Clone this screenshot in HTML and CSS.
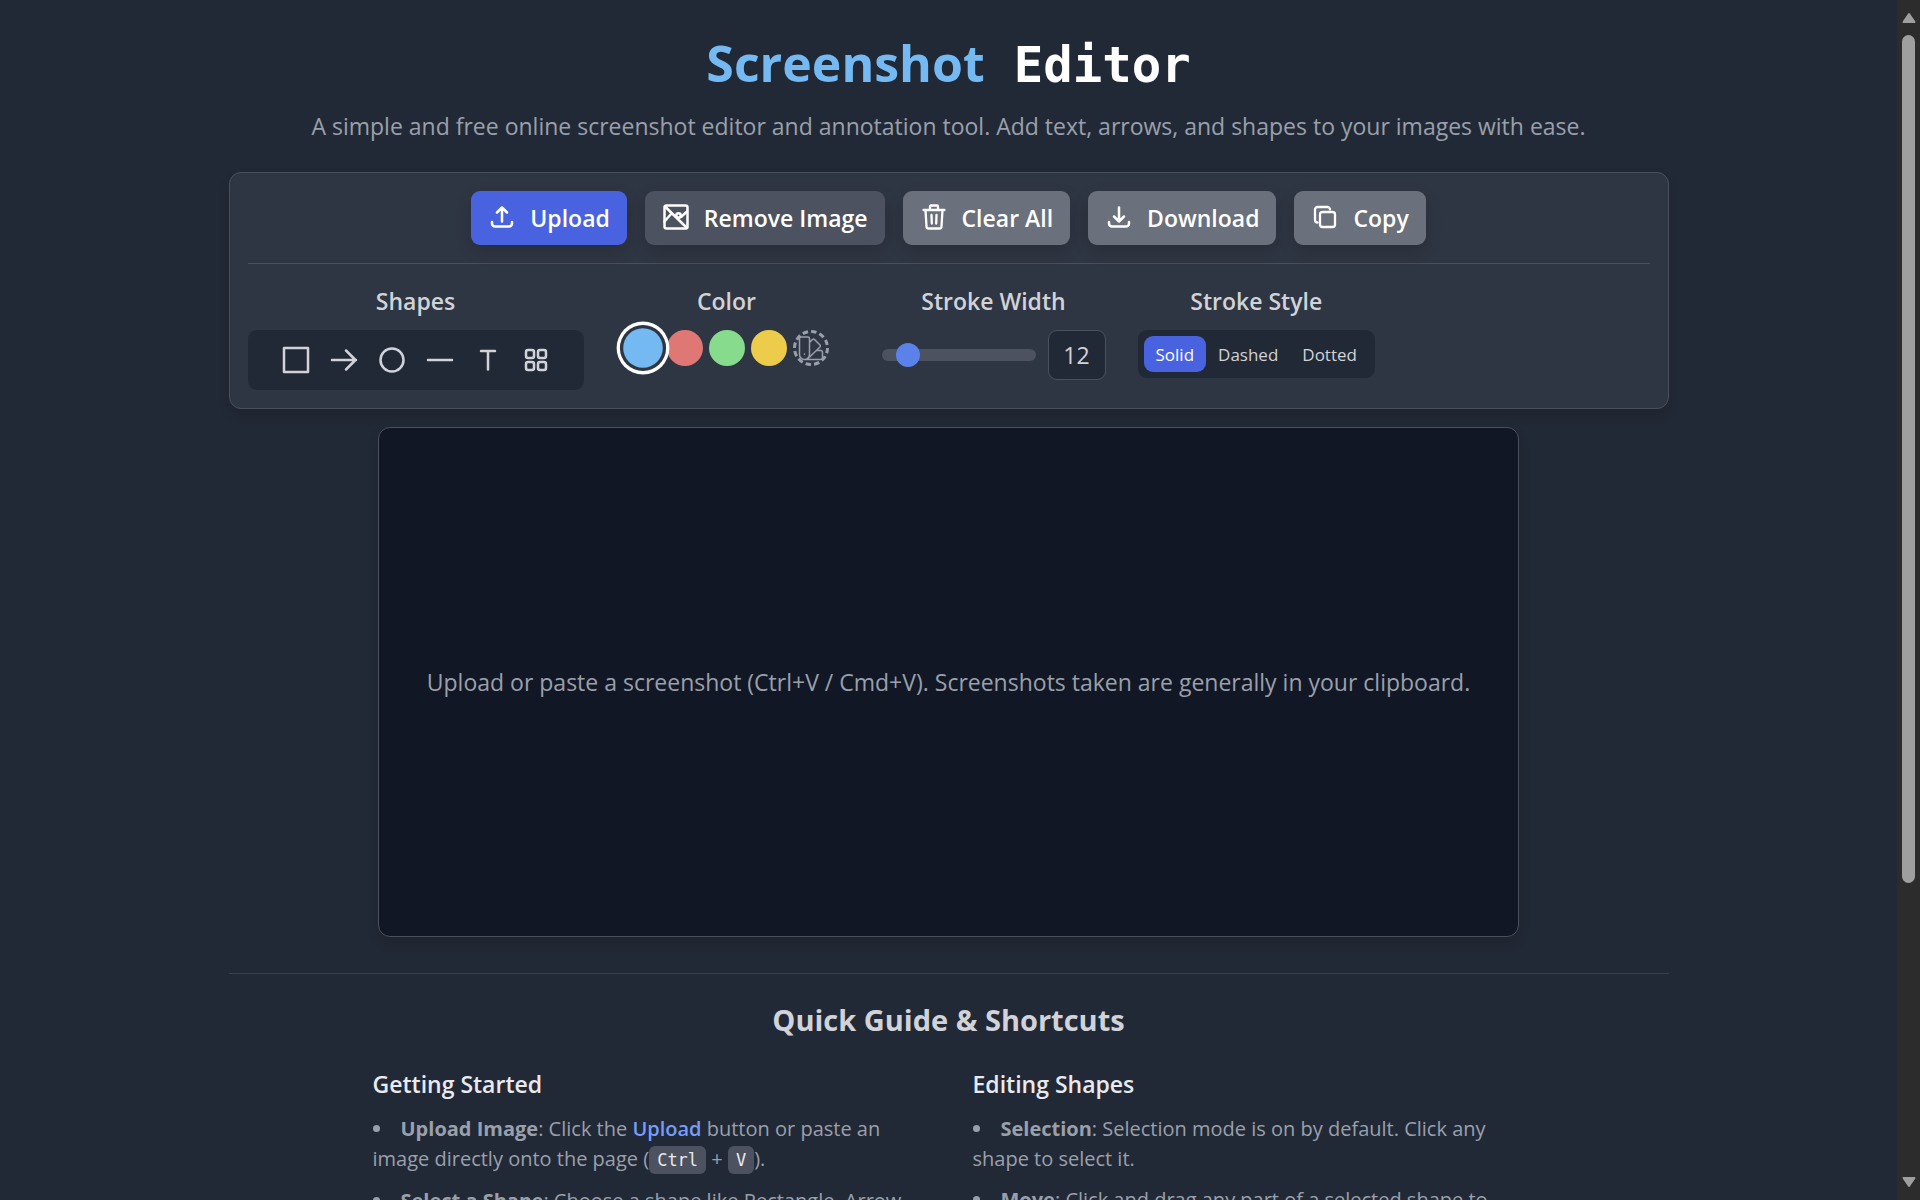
FILE: index.html
```html
<!DOCTYPE html>
<html lang="en">
<head>
    <meta charset="UTF-8">
    <meta name="viewport" content="width=device-width, initial-scale=1.0">
    <title>Screenshot Editor</title>
    <link rel="stylesheet" href="styles.css">
</head>
<body>
    <div class="page">
        <div class="content">
            <header class="header">
                <h1><span class="brand">Screenshot</span> <span class="mono">Editor</span></h1>
                <p>A simple and free online screenshot editor and annotation tool. Add text, arrows, and shapes to your images with ease.</p>
            </header>

            <section class="toolbar">
                <div class="actions">
                    <button class="btn btn-primary" type="button">
                        <svg class="icon" viewBox="-2 -1 28 28"><path d="M12 16.500V3M7 7.500l5-5 5 5M2 17v1.500a3 3 0 0 0 3 3h14a3 3 0 0 0 3-3V17"/></svg>
                        Upload
                    </button>
                    <button class="btn btn-dark" type="button">
                        <svg class="icon" viewBox="-1 0 28 28"><rect x="1.500" y="1.500" width="23" height="23" rx="2"/><path d="M2 2.500l22 21.500M1.500 17.500l7-8M9 9l4 4.500 3 .5M18 13l6-5.500"/><circle cx="15.500" cy="11.500" r="2.200"/></svg>
                        Remove Image
                    </button>
                    <button class="btn" type="button">
                        <svg class="icon icon-thin" viewBox="-1 0 28 28"><path d="M2.500 6h21M9 5.500V2.500a1 1 0 0 1 1-1h6a1 1 0 0 1 1 1v3M4.500 6l1 16.500a2 2 0 0 0 2 2h11a2 2 0 0 0 2-2L21.500 6M10.500 11l.3 8.500M15.500 11l-.3 8.500"/></svg>
                        Clear All
                    </button>
                    <button class="btn" type="button">
                        <svg class="icon" viewBox="-2 -1 28 28"><path d="M12 2.500v13.500M7 11.500l5 5 5-5M2 17v1.500a3 3 0 0 0 3 3h14a3 3 0 0 0 3-3V17"/></svg>
                        Download
                    </button>
                    <button class="btn" type="button">
                        <svg class="icon icon-thin" viewBox="-3 -2 28 28"><rect x="6" y="6" width="15" height="15" rx="2.500"/><path d="M3.500 16.500A2.500 2.500 0 0 1 1 14V3.500A2.500 2.500 0 0 1 3.500 1h10A2.500 2.500 0 0 1 16 3.500"/></svg>
                        Copy
                    </button>
                </div>

                <div class="options">
                    <div class="option option-shapes">
                        <h2>Shapes</h2>
                        <div class="shape-list">
                            <button type="button" aria-label="Rectangle"><svg viewBox="0 0 28 28"><rect x="2" y="2" width="24" height="24"/></svg></button>
                            <button type="button" aria-label="Arrow"><svg viewBox="0 0 28 28"><path d="M2 14h24M16 4.500l9.500 9.500-9.500 9.500"/></svg></button>
                            <button type="button" aria-label="Circle"><svg viewBox="0 0 28 28"><circle cx="14" cy="14" r="11.500"/></svg></button>
                            <button type="button" aria-label="Line"><svg viewBox="0 0 28 28"><path d="M2 14h24"/></svg></button>
                            <button type="button" aria-label="Text"><svg viewBox="0 0 28 28"><path d="M7 5h14M14 5v18.500"/></svg></button>
                            <button type="button" aria-label="More shapes"><svg viewBox="0 0 28 28"><rect x="4" y="4" width="8" height="8" rx="2"/><rect x="16" y="4" width="8" height="8" rx="2"/><rect x="4" y="16" width="8" height="8" rx="2"/><rect x="16" y="16" width="8" height="8" rx="2"/></svg></button>
                        </div>
                    </div>

                    <div class="option option-color">
                        <h2>Color</h2>
                        <div class="color-list">
                            <button class="swatch blue active" type="button" aria-label="Blue"></button>
                            <button class="swatch red" type="button" aria-label="Red"></button>
                            <button class="swatch green" type="button" aria-label="Green"></button>
                            <button class="swatch yellow" type="button" aria-label="Yellow"></button>
                            <button class="swatch custom" type="button" aria-label="Custom color">
                                <svg viewBox="0 0 36 36"><circle class="ring" cx="18" cy="18" r="16.500"/><path d="M6.500 8.500a1.500 1.500 0 0 1 1.500-1.500h7a1.500 1.500 0 0 1 1.500 1.500v16a5 5 0 0 1-10 0zM16.500 12.500l3-3a1.500 1.500 0 0 1 2 0l5.500 5.500a1.500 1.500 0 0 1 0 2L15.500 28M23.500 20.500H28a1.500 1.500 0 0 1 1.500 1.500v6a1.500 1.500 0 0 1-1.500 1.500H11.500M11.500 24v.2"/></svg>
                            </button>
                        </div>
                    </div>

                    <div class="option option-width">
                        <h2>Stroke Width</h2>
                        <div class="width-row">
                            <input class="slider" type="range" min="1" max="72" value="9" aria-label="Stroke width slider">
                            <input class="number" type="text" value="12" aria-label="Stroke width">
                        </div>
                    </div>

                    <div class="option">
                        <h2>Stroke Style</h2>
                        <div class="style-list">
                            <button class="active" type="button">Solid</button>
                            <button type="button">Dashed</button>
                            <button type="button">Dotted</button>
                        </div>
                    </div>
                </div>
            </section>

            <main class="canvas">
                <p>Upload or paste a screenshot (Ctrl+V / Cmd+V). Screenshots taken are generally in your clipboard.</p>
            </main>

            <section class="guide">
                <h2>Quick Guide &amp; Shortcuts</h2>
                <div class="guide-columns">
                    <div>
                        <h3>Getting Started</h3>
                        <ul>
                            <li><strong>Upload Image</strong>: Click the <a href="#">Upload</a> button or paste an image directly onto the page (<kbd>Ctrl</kbd> + <kbd>V</kbd>).</li>
                            <li><strong>Select a Shape</strong>: Choose a shape like Rectangle, Arrow</li>
                        </ul>
                    </div>
                    <div>
                        <h3>Editing Shapes</h3>
                        <ul>
                            <li><strong>Selection</strong>: Selection mode is on by default. Click any shape to select it.</li>
                            <li><strong>Move</strong>: Click and drag any part of a selected shape to</li>
                        </ul>
                    </div>
                </div>
            </section>
        </div>

        <div class="scrollbar">
            <svg viewBox="0 0 16 12"><path d="M8 2l5.500 8h-11z"/></svg>
            <div class="track"><div class="thumb"></div></div>
            <svg viewBox="0 0 16 12"><path d="M8 10l5.500-8h-11z"/></svg>
        </div>
    </div>
</body>
</html>
```
FILE: styles.css
```css
* {
    box-sizing: border-box;
}
body {
    margin: 0;
    font-family: "Open Sans", "Noto Sans", sans-serif;
    font-size: 23px;
    background-color: #222936;
    color: #d1d3d8;
}
h1, h2, h3, p, ul {
    margin: 0;
    padding: 0;
}
button, input {
    font-family: inherit;
    font-size: inherit;
    color: inherit;
    border: none;
}
button {
    cursor: pointer;
}
svg {
    display: block;
    fill: none;
    stroke: currentColor;
    stroke-width: 2;
    stroke-linecap: round;
    stroke-linejoin: round;
}
.page {
    display: grid;
    grid-template-columns: 1fr 23px;
    height: 100vh;
    overflow: hidden;
}
.content {
    display: flex;
    flex-direction: column;
    align-items: center;
    height: 100vh;
    overflow: hidden;
    padding: 27px 24px 0;
}
.content > * {
    flex-shrink: 0;
}
.header {
    text-align: center;
    margin-bottom: 28px;
}
.header h1 {
    font-size: 50px;
    line-height: 72px;
    font-weight: 700;
    color: #fff;
}
.header h1 .brand {
    color: #74b9f1;
    margin-right: 16px;
}
.header h1 .mono {
    font-family: "DejaVu Sans Mono", monospace;
    font-size: 49px;
}
.header p {
    margin-top: 6px;
    line-height: 36px;
    color: #9aa0ab;
}

/* Toolbar */
.toolbar {
    width: 100%;
    max-width: 1440px;
    padding: 18px;
    background-color: #2f3643;
    border: 1px solid #4a505d;
    border-radius: 12px;
    box-shadow: 0 6px 12px rgba(0, 0, 0, 0.12);
}
.actions {
    display: flex;
    justify-content: center;
    gap: 18px;
    padding-bottom: 18px;
    border-bottom: 1px solid #4a505d;
}
.btn {
    display: flex;
    align-items: center;
    gap: 14px;
    height: 54px;
    padding: 0 17px;
    border-radius: 9px;
    background-color: #6a707c;
    color: #fff;
    font-weight: 600;
    box-shadow: 0 6px 16px rgba(0, 0, 0, 0.16);
}
.btn-primary {
    background-color: #4963e0;
}
.btn-dark {
    background-color: #4c525f;
}
.icon {
    width: 28px;
    height: 28px;
    stroke-width: 2.5;
}
.icon-thin {
    stroke-width: 2.3;
}
.options {
    display: flex;
    align-items: flex-start;
    gap: 20px;
    padding-top: 18px;
}
.option {
    display: flex;
    flex-direction: column;
    align-items: center;
    gap: 10px;
}
.option h2 {
    font-size: 23px;
    line-height: 38px;
    font-weight: 600;
}
.option-color {
    width: 246px;
}
.option-width {
    width: 248px;
}
.shape-list {
    display: flex;
    gap: 2px;
    padding: 7px 25px;
    border-radius: 9px;
    background-color: #222936;
}
.shape-list button {
    padding: 9px;
    background: none;
}
.shape-list svg {
    width: 28px;
    height: 28px;
    stroke-width: 2.5;
}
.color-list {
    display: flex;
    gap: 6px;
}
.swatch {
    width: 36px;
    height: 36px;
    padding: 0;
    border-radius: 50%;
}
.swatch.active {
    position: relative;
    transform: scale(1.1);
    box-shadow: 0 0 0 3px #2f3643, 0 0 0 6px #fff;
}
.blue {
    background-color: #74b9f1;
}
.red {
    background-color: #df7875;
}
.green {
    background-color: #86db8c;
}
.yellow {
    background-color: #edcc4b;
}
.custom {
    background: none;
    color: #9aa0ab;
}
.custom svg {
    stroke-width: 1.5;
}
.custom .ring {
    stroke-width: 3;
    stroke-linecap: butt;
    stroke-dasharray: 5.4 3.2;
}
.width-row {
    display: flex;
    align-items: center;
    gap: 12px;
}
.slider {
    appearance: none;
    width: 154px;
    height: 12px;
    margin: 0;
    border-radius: 6px;
    background-color: #4c525f;
}
.slider::-webkit-slider-thumb {
    appearance: none;
    width: 24px;
    height: 24px;
    border-radius: 50%;
    background-color: #5b82eb;
}
.number {
    width: 58px;
    height: 50px;
    padding: 0;
    text-align: center;
    border: 1px solid #4a505d;
    border-radius: 9px;
    background-color: #222936;
}
.style-list {
    display: flex;
    padding: 6px;
    border-radius: 9px;
    background-color: #222936;
}
.style-list button {
    height: 36px;
    padding: 0 12px;
    border-radius: 9px;
    background: none;
    font-size: 17px;
}
.style-list .active {
    background-color: #4963e0;
    color: #fff;
}

/* Canvas */
.canvas {
    display: flex;
    align-items: center;
    justify-content: center;
    height: 510px;
    margin-top: 18px;
    padding: 0 48px;
    border: 1px solid #4a505d;
    border-radius: 12px;
    background-color: #121725;
    color: #9aa0ab;
    box-shadow: 0 6px 12px rgba(0, 0, 0, 0.12);
}

/* Guide */
.guide {
    width: 100%;
    max-width: 1440px;
    margin-top: 36px;
    padding-top: 24px;
    border-top: 1px solid #3a414e;
}
.guide > h2 {
    font-size: 29px;
    line-height: 44px;
    font-weight: 700;
    text-align: center;
}
.guide-columns {
    display: grid;
    grid-template-columns: 1fr 1fr;
    gap: 48px;
    max-width: 1152px;
    margin: 24px auto 0;
}
.guide h3 {
    font-size: 23px;
    line-height: 36px;
    font-weight: 600;
    color: #e9eaed;
}
.guide ul {
    margin-top: 12px;
    list-style-position: inside;
    font-size: 20px;
    line-height: 30px;
    color: #9aa0ab;
}
.guide li {
    margin-bottom: 11px;
}
.guide a {
    color: #769dfa;
    font-weight: 600;
    text-decoration: none;
}
.guide kbd {
    padding: 4px 8px;
    border-radius: 6px;
    background-color: #4c525f;
    color: #e9eaed;
    font-family: "DejaVu Sans Mono", monospace;
    font-size: 17px;
}

/* Scrollbar */
.scrollbar {
    display: flex;
    flex-direction: column;
    align-items: center;
    gap: 11px;
    padding: 12px 0;
    background-color: #2c2c2c;
}
.scrollbar svg {
    width: 16px;
    height: 12px;
    fill: #9f9f9f;
    stroke: #9f9f9f;
}
.track {
    flex: 1;
}
.thumb {
    width: 13px;
    height: 75%;
    border-radius: 7px;
    background-color: #9f9f9f;
}
```
